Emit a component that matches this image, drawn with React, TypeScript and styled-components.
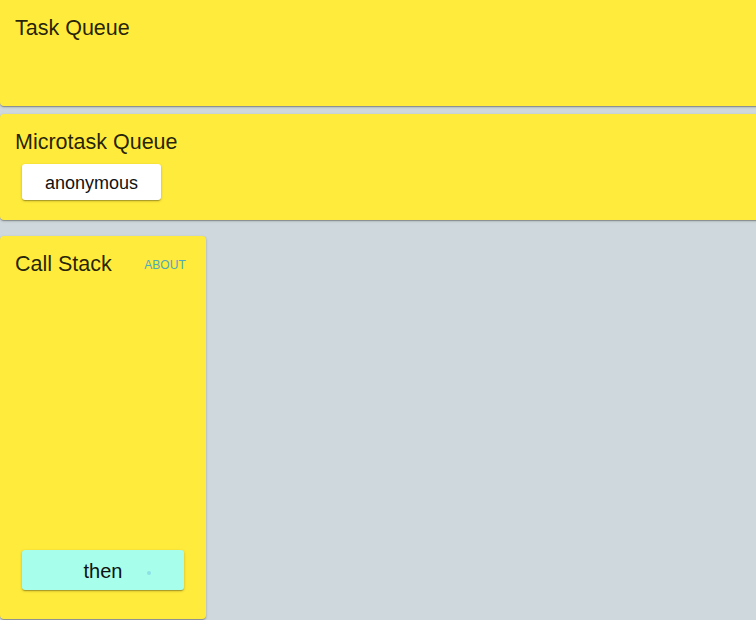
import styled, { createGlobalStyle } from "styled-components";

const GlobalStyle = createGlobalStyle`
  html, body {
    margin: 0;
    padding: 0;
    background-color: #cfd8dc;
    overflow: hidden;
  }
  body {
    font-family: "Liberation Sans", Arial, sans-serif;
    color: rgba(0, 0, 0, 0.87);
  }
`;

const Page = styled.div`
  width: 756px;
  height: 620px;
  display: flex;
  flex-direction: column;
  overflow: hidden;
`;

const Panel = styled.section<{ gap?: number }>`
  background-color: #ffeb3b;
  border-radius: 4px;
  box-shadow: 0 1px 3px rgba(0, 0, 0, 0.2), 0 1px 1px rgba(0, 0, 0, 0.14),
    0 2px 1px -1px rgba(0, 0, 0, 0.12);
  margin-top: ${(props) => props.gap || 0}px;
`;

const QueuePanel = styled(Panel)`
  width: 770px;
  height: 106px;
  box-sizing: border-box;
  padding: 12px 0 0 15px;
  flex-shrink: 0;
  &:first-child {
    border-top-left-radius: 0;
  }
`;

const StackPanel = styled(Panel)`
  width: 206px;
  height: 383px;
  box-sizing: border-box;
  padding: 12px 20px 29px 15px;
  display: flex;
  flex-direction: column;
  flex-shrink: 0;
`;

const Title = styled.h2`
  margin: 0;
  font-size: 21.5px;
  font-weight: 400;
  line-height: 32px;
`;

const Header = styled.div`
  display: flex;
  align-items: center;
  justify-content: space-between;
`;

const AboutLink = styled.a`
  font-size: 12px;
  color: #4fa8bd;
  text-transform: uppercase;
  text-decoration: none;
  letter-spacing: 0.1px;
  padding-top: 2px;
`;

const Stack = styled.div`
  flex: 1;
  display: flex;
  flex-direction: column;
  justify-content: flex-end;
`;

const Frame = styled.div<{ bg: string; w: number; h: number }>`
  position: relative;
  width: ${(props) => props.w}px;
  height: ${(props) => props.h}px;
  margin-left: 7px;
  box-sizing: border-box;
  padding-top: 2px;
  background-color: ${(props) => props.bg};
  border-radius: 3px;
  box-shadow: 0 1px 3px rgba(0, 0, 0, 0.2), 0 1px 1px rgba(0, 0, 0, 0.14),
    0 2px 1px -1px rgba(0, 0, 0, 0.12);
  display: flex;
  align-items: center;
  justify-content: center;
  font-size: 18px;
  color: #111;
`;

const ThenFrame = styled(Frame)`
  font-size: 20px;
  padding-top: 3px;
  &::after {
    content: "";
    position: absolute;
    left: 125px;
    top: 21px;
    width: 4px;
    height: 4px;
    border-radius: 50%;
    background-color: #8fdfe6;
  }
`;

const Row = styled.div`
  display: flex;
  margin-top: 6px;
`;

function App() {
  return (
    <Page>
      <GlobalStyle />
      <QueuePanel>
        <Title>Task Queue</Title>
      </QueuePanel>
      <QueuePanel gap={8}>
        <Title>Microtask Queue</Title>
        <Row>
          <Frame bg="#ffffff" w={139} h={36}>
            anonymous
          </Frame>
        </Row>
      </QueuePanel>
      <StackPanel gap={16}>
        <Header>
          <Title>Call Stack</Title>
          <AboutLink href="#">About</AboutLink>
        </Header>
        <Stack>
          <ThenFrame bg="#a7ffeb" w={162} h={40}>
            then
          </ThenFrame>
        </Stack>
      </StackPanel>
    </Page>
  );
}

export default App;
